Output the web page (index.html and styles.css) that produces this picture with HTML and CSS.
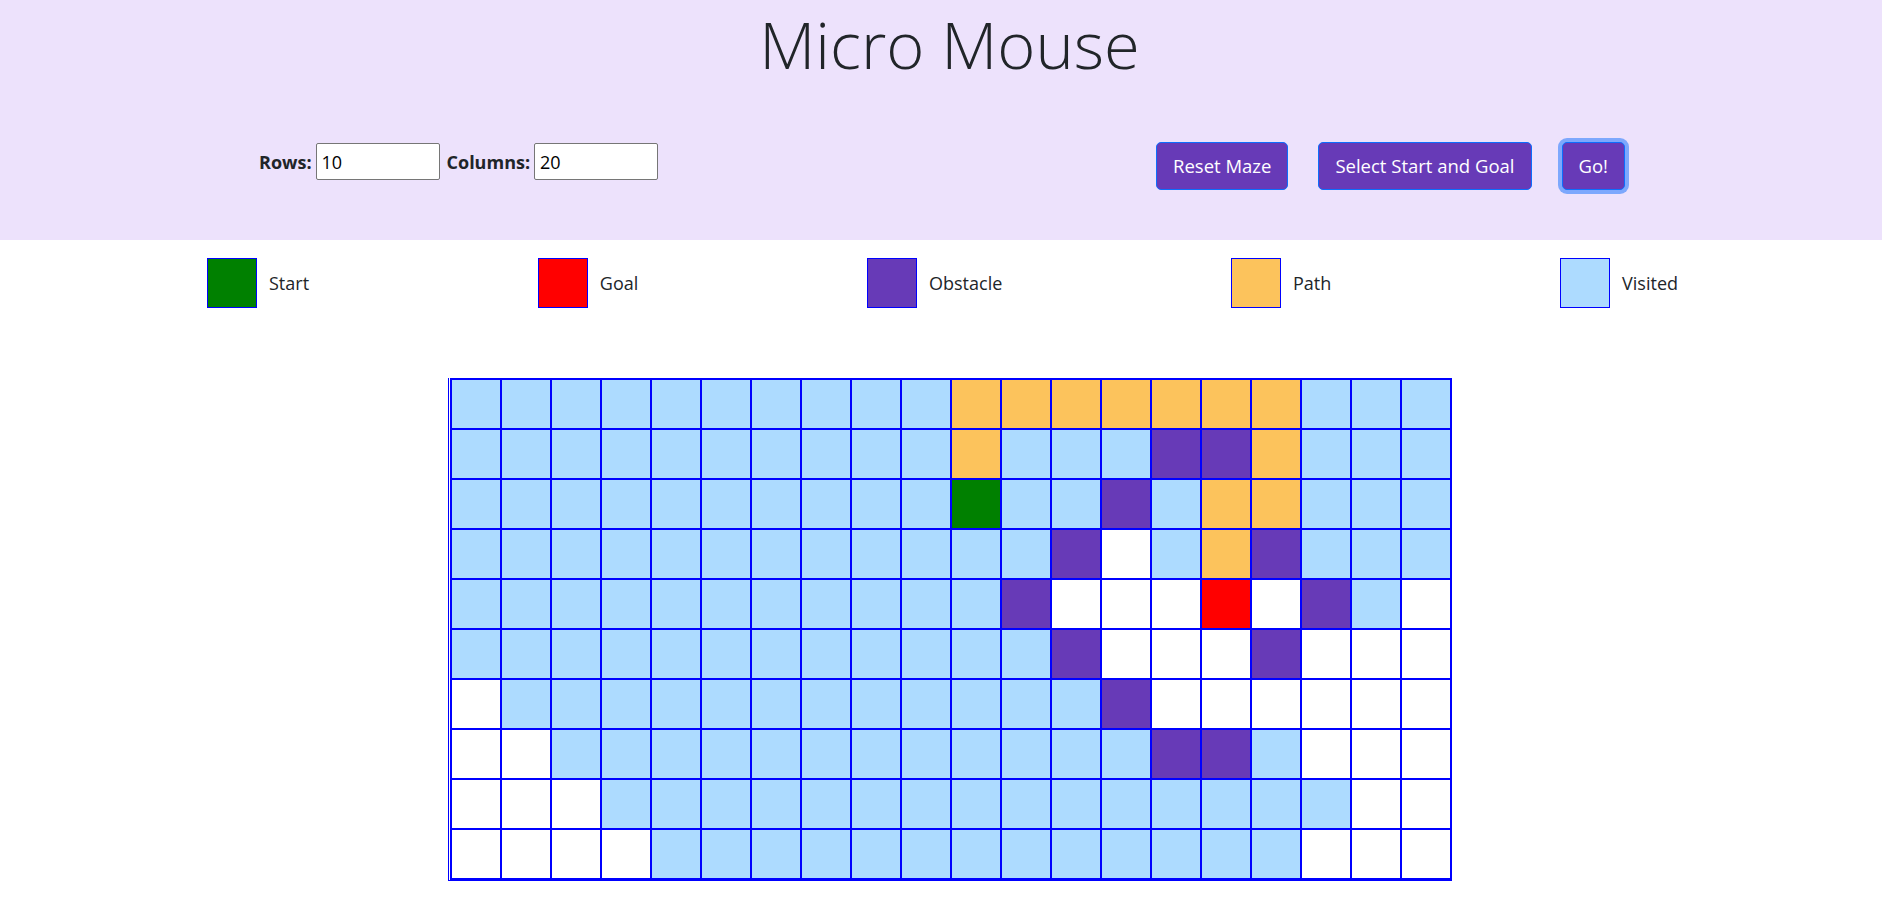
FILE: index.html
```html
<!DOCTYPE html>
<html>
<head>
<meta charset="utf-8">
<title>Micro Mouse</title>
<link rel="stylesheet" href="styles.css">
</head>
<body>
<header class="header">
  <h1 class="title">Micro Mouse</h1>
  <div class="controls">
    <div class="dims">
      <label class="lbl" for="rows">Rows:</label>
      <input class="num" id="rows" type="text" value="10">
      <label class="lbl" for="cols">Columns:</label>
      <input class="num" id="cols" type="text" value="20">
    </div>
    <div class="actions">
      <button class="btn">Reset Maze</button>
      <button class="btn">Select Start and Goal</button>
      <button class="btn focus">Go!</button>
    </div>
  </div>
</header>

<section class="legend">
  <div class="item"><span class="sw start"></span><span class="ltext">Start</span></div>
  <div class="item"><span class="sw goal"></span><span class="ltext">Goal</span></div>
  <div class="item"><span class="sw obst"></span><span class="ltext">Obstacle</span></div>
  <div class="item"><span class="sw path"></span><span class="ltext">Path</span></div>
  <div class="item"><span class="sw visit"></span><span class="ltext">Visited</span></div>
</section>

<main class="main">
  <div class="maze">
    <div class="board">
      <!-- row 0 -->
      <span class="c v"></span><span class="c v"></span><span class="c v"></span><span class="c v"></span><span class="c v"></span><span class="c v"></span><span class="c v"></span><span class="c v"></span><span class="c v"></span><span class="c v"></span><span class="c p"></span><span class="c p"></span><span class="c p"></span><span class="c p"></span><span class="c p"></span><span class="c p"></span><span class="c p"></span><span class="c v"></span><span class="c v"></span><span class="c v"></span>
      <!-- row 1 -->
      <span class="c v"></span><span class="c v"></span><span class="c v"></span><span class="c v"></span><span class="c v"></span><span class="c v"></span><span class="c v"></span><span class="c v"></span><span class="c v"></span><span class="c v"></span><span class="c p"></span><span class="c v"></span><span class="c v"></span><span class="c v"></span><span class="c o"></span><span class="c o"></span><span class="c p"></span><span class="c v"></span><span class="c v"></span><span class="c v"></span>
      <!-- row 2 -->
      <span class="c v"></span><span class="c v"></span><span class="c v"></span><span class="c v"></span><span class="c v"></span><span class="c v"></span><span class="c v"></span><span class="c v"></span><span class="c v"></span><span class="c v"></span><span class="c s"></span><span class="c v"></span><span class="c v"></span><span class="c o"></span><span class="c v"></span><span class="c p"></span><span class="c p"></span><span class="c v"></span><span class="c v"></span><span class="c v"></span>
      <!-- row 3 -->
      <span class="c v"></span><span class="c v"></span><span class="c v"></span><span class="c v"></span><span class="c v"></span><span class="c v"></span><span class="c v"></span><span class="c v"></span><span class="c v"></span><span class="c v"></span><span class="c v"></span><span class="c v"></span><span class="c o"></span><span class="c w"></span><span class="c v"></span><span class="c p"></span><span class="c o"></span><span class="c v"></span><span class="c v"></span><span class="c v"></span>
      <!-- row 4 -->
      <span class="c v"></span><span class="c v"></span><span class="c v"></span><span class="c v"></span><span class="c v"></span><span class="c v"></span><span class="c v"></span><span class="c v"></span><span class="c v"></span><span class="c v"></span><span class="c v"></span><span class="c o"></span><span class="c w"></span><span class="c w"></span><span class="c w"></span><span class="c g"></span><span class="c w"></span><span class="c o"></span><span class="c v"></span><span class="c w"></span>
      <!-- row 5 -->
      <span class="c v"></span><span class="c v"></span><span class="c v"></span><span class="c v"></span><span class="c v"></span><span class="c v"></span><span class="c v"></span><span class="c v"></span><span class="c v"></span><span class="c v"></span><span class="c v"></span><span class="c v"></span><span class="c o"></span><span class="c w"></span><span class="c w"></span><span class="c w"></span><span class="c o"></span><span class="c w"></span><span class="c w"></span><span class="c w"></span>
      <!-- row 6 -->
      <span class="c w"></span><span class="c v"></span><span class="c v"></span><span class="c v"></span><span class="c v"></span><span class="c v"></span><span class="c v"></span><span class="c v"></span><span class="c v"></span><span class="c v"></span><span class="c v"></span><span class="c v"></span><span class="c v"></span><span class="c o"></span><span class="c w"></span><span class="c w"></span><span class="c w"></span><span class="c w"></span><span class="c w"></span><span class="c w"></span>
      <!-- row 7 -->
      <span class="c w"></span><span class="c w"></span><span class="c v"></span><span class="c v"></span><span class="c v"></span><span class="c v"></span><span class="c v"></span><span class="c v"></span><span class="c v"></span><span class="c v"></span><span class="c v"></span><span class="c v"></span><span class="c v"></span><span class="c v"></span><span class="c o"></span><span class="c o"></span><span class="c v"></span><span class="c w"></span><span class="c w"></span><span class="c w"></span>
      <!-- row 8 -->
      <span class="c w"></span><span class="c w"></span><span class="c w"></span><span class="c v"></span><span class="c v"></span><span class="c v"></span><span class="c v"></span><span class="c v"></span><span class="c v"></span><span class="c v"></span><span class="c v"></span><span class="c v"></span><span class="c v"></span><span class="c v"></span><span class="c v"></span><span class="c v"></span><span class="c v"></span><span class="c v"></span><span class="c w"></span><span class="c w"></span>
      <!-- row 9 -->
      <span class="c w"></span><span class="c w"></span><span class="c w"></span><span class="c w"></span><span class="c v"></span><span class="c v"></span><span class="c v"></span><span class="c v"></span><span class="c v"></span><span class="c v"></span><span class="c v"></span><span class="c v"></span><span class="c v"></span><span class="c v"></span><span class="c v"></span><span class="c v"></span><span class="c v"></span><span class="c w"></span><span class="c w"></span><span class="c w"></span>
    </div>
  </div>
</main>
</body>
</html>
```

FILE: styles.css
```css
* { box-sizing: border-box; }

html, body {
  margin: 0;
  padding: 0;
  background: #ffffff;
  color: #212529;
  font-family: "Open Sans", "Noto Sans", "Liberation Sans", sans-serif;
}

.header {
  background: #ede2fc;
  height: 240px;
  padding-top: 0;
}

.title {
  margin: 0;
  padding-left: 17px;
  text-align: center;
  font-weight: 300;
  font-size: 65px;
  line-height: 89px;
  color: #212529;
}

.controls {
  margin-top: 53px;
  display: flex;
  justify-content: space-between;
  align-items: flex-start;
  padding: 0 257px 0 259px;
}

.dims {
  display: flex;
  align-items: center;
  margin-top: 1px;
  gap: 4px;
}

.lbl {
  font-weight: 700;
  font-size: 18px;
  color: #212529;
}

.num {
  width: 124px;
  height: 37px;
  border: 1px solid #767676;
  border-radius: 2px;
  padding: 0 5px;
  font-family: inherit;
  font-size: 18px;
  color: #000;
  background: #fff;
}

.dims .num + .lbl { margin-left: 3px; }

.actions {
  display: flex;
  gap: 30px;
}

.btn {
  height: 48px;
  padding: 0 16px;
  border: 1px solid #0d6efd;
  border-radius: 5px;
  background: #673ab7;
  color: #fff;
  font-family: inherit;
  font-size: 18.5px;
  line-height: 30px;
}

.btn.focus {
  box-shadow: 0 0 0 4px rgba(13, 110, 253, 0.5);
}

.legend {
  margin-top: 18px;
  display: flex;
  justify-content: space-between;
  align-items: center;
  padding: 0 204px 0 207px;
}

.item {
  display: flex;
  align-items: center;
}

.sw {
  display: block;
  width: 50px;
  height: 50px;
  border: 1px solid #0000ff;
}

.ltext {
  margin-left: 12px;
  font-size: 18px;
  color: #212529;
}

.start, .s { background: #008000; }
.goal, .g { background: #ff0000; }
.obst, .o { background: #673ab7; }
.path, .p { background: #fcc35c; }
.visit, .v { background: #addbff; }
.w { background: #ffffff; }

.main {
  margin-top: 70px;
  padding-left: 17px;
  display: flex;
  justify-content: center;
}

.maze {
  border-left: 1px solid #0000ff;
  border-bottom: 1px solid #0000ff;
  padding-left: 1px;
}

.board {
  display: grid;
  grid-template-columns: repeat(20, 50px);
  grid-auto-rows: 50px;
  border: 1px solid #0000ff;
}

.c {
  display: block;
  border: 1px solid #0000ff;
}
```
